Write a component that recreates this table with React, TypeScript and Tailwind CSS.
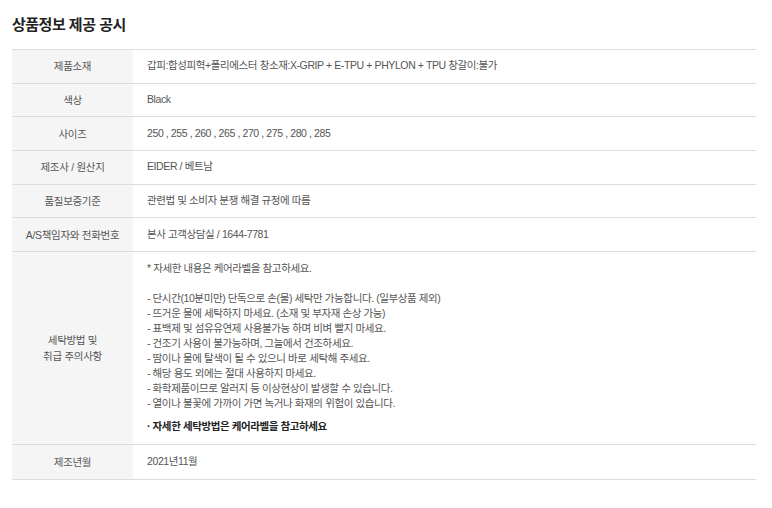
const rows: { label: string; value: string }[] = [
  { label: "제품소재", value: "갑피:합성피혁+폴리에스터 창소재:X-GRIP + E-TPU + PHYLON + TPU 창갈이:불가" },
  { label: "색상", value: "Black" },
  { label: "사이즈", value: "250 , 255 , 260 , 265 , 270 , 275 , 280 , 285" },
  { label: "제조사 / 원산지", value: "EIDER / 베트남" },
  { label: "품질보증기준", value: "관련법 및 소비자 분쟁 해결 규정에 따름" },
  { label: "A/S책임자와 전화번호", value: "본사 고객상담실 / 1644-7781" },
];

const careLines = [
  "- 단시간(10분미만) 단독으로 손(물) 세탁만 가능합니다. (일부상품 제외)",
  "- 뜨거운 물에 세탁하지 마세요. (소재 및 부자재 손상 가능)",
  "- 표백제 및 섬유유연제 사용불가능 하며 비벼 빨지 마세요.",
  "- 건조기 사용이 불가능하며, 그늘에서 건조하세요.",
  "- 땀이나 물에 탈색이 될 수 있으니 바로 세탁해 주세요.",
  "- 해당 용도 외에는 절대 사용하지 마세요.",
  "- 화학제품이므로 알러지 등 이상현상이 발생할 수 있습니다.",
  "- 열이나 불꽃에 가까이 가면 녹거나 화재의 위험이 있습니다.",
];

function Row({ label, children, h = "h-[33.67px]" }: { label: React.ReactNode; children: React.ReactNode; h?: string }) {
  return (
    <div className={`flex border-b border-[#dedede] ${h}`}>
      <div className="w-[121px] shrink-0 bg-[#f5f5f5] flex items-center justify-center text-center text-[10.5px] tracking-[-0.3px] leading-[16px] text-[#555]">
        {label}
      </div>
      <div className="flex-1 flex items-center pl-[14px] text-[10.5px] tracking-[-0.4px] text-[#555]">{children}</div>
    </div>
  );
}

export default function App() {
  return (
    <div
      className="w-[772px] h-[508px] bg-white px-[12px] pt-[14px]"
      style={{ fontFamily: '"Liberation Sans", "Noto Sans CJK KR", sans-serif' }}
    >
      <h2 className="text-[15px] font-bold text-[#222] leading-[22px] tracking-[-0.5px]">상품정보 제공 공시</h2>

      {/* table */}
      <div className="mt-[13px] w-[744px] border-t border-[#dedede]">
        {rows.map((r) => (
          <Row key={r.label} label={r.label}>
            {r.value}
          </Row>
        ))}

        <Row
          h=""
          label={
            <>
              세탁방법 및
              <br />
              취급 주의사항
            </>
          }
        >
          <div className="pt-[9px] pb-[10px] leading-[15px]">
            <p>* 자세한 내용은 케어라벨을 참고하세요.</p>
            <div className="mt-[15px]">
              {careLines.map((l) => (
                <p key={l}>{l}</p>
              ))}
            </div>
            <p className="mt-[8px] font-bold text-[#222]">· 자세한 세탁방법은 케어라벨을 참고하세요</p>
          </div>
        </Row>

        <Row h="h-[35px]" label="제조년월">2021년11월</Row>
      </div>
    </div>
  );
}
